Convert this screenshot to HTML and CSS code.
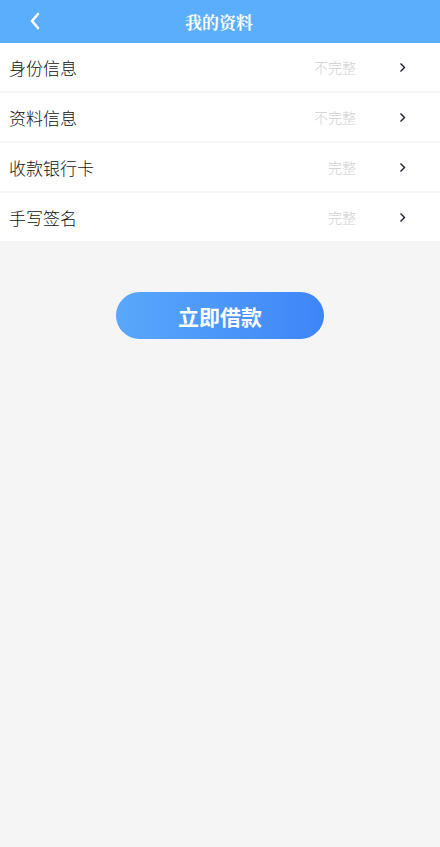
FILE: index.html
```html
<!DOCTYPE html>
<html lang="zh">
<head>
<meta charset="utf-8">
<link rel="stylesheet" href="styles.css">
</head>
<body>
<header class="topbar">
  <span class="back"><svg width="12" height="18" viewBox="0 0 12 18"><path d="M9 2 L3 9 L9 16" fill="none" stroke="#fff" stroke-width="2.6" stroke-linecap="round" stroke-linejoin="round"/></svg></span>
  <h1 class="title">我的资料</h1>
</header>
<ul class="list">
  <li class="row"><span class="label">身份信息</span><span class="status">不完整</span><span class="arrow"><svg width="7" height="11" viewBox="0 0 7 11"><path d="M1.5 1.5 L5.5 5.5 L1.5 9.5" fill="none" stroke="#1c1c2a" stroke-width="1.4"/></svg></span></li>
  <li class="row"><span class="label">资料信息</span><span class="status">不完整</span><span class="arrow"><svg width="7" height="11" viewBox="0 0 7 11"><path d="M1.5 1.5 L5.5 5.5 L1.5 9.5" fill="none" stroke="#1c1c2a" stroke-width="1.4"/></svg></span></li>
  <li class="row"><span class="label">收款银行卡</span><span class="status">完整</span><span class="arrow"><svg width="7" height="11" viewBox="0 0 7 11"><path d="M1.5 1.5 L5.5 5.5 L1.5 9.5" fill="none" stroke="#1c1c2a" stroke-width="1.4"/></svg></span></li>
  <li class="row"><span class="label">手写签名</span><span class="status">完整</span><span class="arrow"><svg width="7" height="11" viewBox="0 0 7 11"><path d="M1.5 1.5 L5.5 5.5 L1.5 9.5" fill="none" stroke="#1c1c2a" stroke-width="1.4"/></svg></span></li>
</ul>
<div class="action">
  <button class="btn">立即借款</button>
</div>
</body>
</html>
```

FILE: styles.css
```css
* { box-sizing: border-box; }
html, body { margin: 0; padding: 0; }
body {
  background: #f6f5f6;
  font-family: "Noto Sans CJK SC", "Noto Sans", sans-serif;
  width: 440px;
  min-height: 847px;
}
.topbar {
  position: relative;
  height: 43px;
  background: #5aaefb;
  display: flex;
  align-items: center;
  justify-content: center;
}
.back {
  position: absolute;
  left: 29px;
  top: 12px;
  display: flex;
}
.title {
  margin: 0 0 0 -2px;
  color: #fff;
  font-size: 17px;
  font-weight: 700;
  font-family: "Noto Serif CJK SC", "Noto Sans CJK SC", serif;
  line-height: 1;
}
.list {
  list-style: none;
  margin: 0;
  padding: 0;
  background: #fff;
}
.row {
  height: 50px;
  display: flex;
  align-items: center;
  padding-left: 9px;
  border-top: 2px solid #f7f7f7;
}
.row:first-child { border-top: none; height: 48px; }
.label {
  flex: 1;
  font-size: 17px;
  color: #111;
  font-weight: 300;
}
.status {
  font-size: 14px;
  color: #d0d0d0;
  font-weight: 300;
}
.arrow {
  width: 7px;
  margin-left: 43px;
  margin-right: 34px;
  display: flex;
}
.action {
  display: flex;
  justify-content: center;
  padding-top: 51px;
}
.btn {
  width: 208px;
  height: 47px;
  border: none;
  border-radius: 24px;
  background: linear-gradient(90deg, #58a8fb, #3f85f8);
  color: #fff;
  font-family: "Noto Sans CJK SC", sans-serif;
  font-size: 21px;
  font-weight: 700;
  letter-spacing: 0;
}
```
